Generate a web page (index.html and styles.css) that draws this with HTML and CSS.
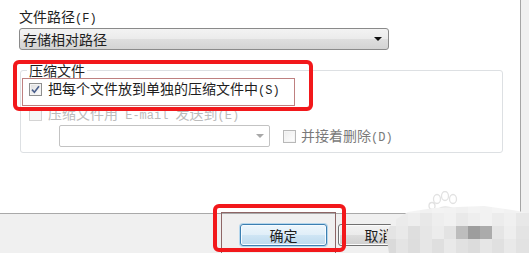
FILE: index.html
```html
<!DOCTYPE html>
<html lang="zh-CN">
<head>
<meta charset="utf-8">
<title>压缩文件</title>
<link rel="stylesheet" href="styles.css">
</head>
<body>
  <div class="panel">
    <div class="field-label">文件路径<span class="lat">(F)</span></div>
    <div class="select">
      <span class="select-text">存储相对路径</span>
      <span class="arrow"></span>
    </div>
    <fieldset class="group">
      <legend>压缩文件</legend>
      <div class="row row-first">
        <span class="cb cb-checked">
          <svg width="9" height="9" viewBox="0 0 9 9"><path d="M1 4.6 L3.4 7.2 L8 1.2" fill="none" stroke="#4a5f8c" stroke-width="1.6"/></svg>
        </span>
        <span class="cb-text">把每个文件放到单独的压缩文件中<span class="lat">(S)</span></span>
      </div>
      <div class="row row-faded">
        <span class="cb cb-faded"></span>
        <span class="cb-text">压缩文件用<span class="lat"> E-mail </span>发送到<span class="lat">(E)</span></span>
      </div>
      <div class="row row-combo">
        <div class="combo"><span class="arrow arrow-grey"></span></div>
        <span class="cb cb-light"></span>
        <span class="cb-text dim">并接着删除<span class="lat">(D)</span></span>
      </div>
    </fieldset>
  </div>
  <div class="footer">
    <button class="btn btn-ok">确定</button>
    <button class="btn btn-cancel">取消</button>
  </div>

  <svg class="paw" width="34" height="24" viewBox="0 0 34 24">
    <g fill="none" stroke="#e2e2e2" stroke-width="1.3">
      <ellipse cx="9" cy="8" rx="3.5" ry="4.5"/>
      <ellipse cx="17" cy="5" rx="3.5" ry="4.5"/>
      <ellipse cx="25" cy="8" rx="3.5" ry="4.5"/>
      <ellipse cx="4" cy="15" rx="3" ry="3.5"/>
      <path d="M8 22 C 9 14, 25 14, 28 22"/>
    </g>
  </svg>

  <div class="mosaic">
    <span style="background:#f3f3f3"></span><span style="background:#f2f2f2"></span><span style="background:#f4f4f4"></span><span style="background:#f1f1f1"></span><span style="background:#f3f3f3"></span><span style="background:#f2f2f2"></span><span style="background:#f0f0f0"></span><span style="background:#f3f3f3"></span><span style="background:#f2f2f2"></span><span style="background:#f4f4f4"></span><span style="background:#f2f2f2"></span><span style="background:#f3f3f3"></span>
    <span style="background:#f0f0f0"></span><span style="background:#ebebeb"></span><span style="background:#eeeeee"></span><span style="background:#e8e8e8"></span><span style="background:#eeeeee"></span><span style="background:#f1f1f1"></span><span style="background:#e9e9e9"></span><span style="background:#eeeeee"></span><span style="background:#f2f2f2"></span><span style="background:#ececec"></span><span style="background:#f0f0f0"></span><span style="background:#e8e8e8"></span>
    <span style="background:#e4e4e4"></span><span style="background:#e9e9e9"></span><span style="background:#dedede"></span><span style="background:#e6e6e6"></span><span style="background:#ececec"></span><span style="background:#e3e3e3"></span><span style="background:#bdbdbd"></span><span style="background:#9d9d9d"></span><span style="background:#ababab"></span><span style="background:#e5e5e5"></span><span style="background:#eeeeee"></span><span style="background:#e4e4e4"></span>
    <span style="background:#dadada"></span><span style="background:#e4e4e4"></span><span style="background:#dddddd"></span><span style="background:#e6e6e6"></span><span style="background:#dfdfdf"></span><span style="background:#e9e9e9"></span><span style="background:#e1e1e1"></span><span style="background:#dcdcdc"></span><span style="background:#e6e6e6"></span><span style="background:#e0e0e0"></span><span style="background:#e9e9e9"></span><span style="background:#e2e2e2"></span>
  </div>

  <div class="thin thin-a"></div>
  <div class="thin thin-b"></div>
  <div class="mark mark-a"></div>
  <div class="mark mark-b"></div>
</body>
</html>
```
FILE: styles.css
```css
* { box-sizing: border-box; }
html, body { margin: 0; padding: 0; }
body {
  width: 529px;
  height: 253px;
  overflow: hidden;
  position: relative;
  background: #f0f0f0;
  font-family: "Noto Sans CJK SC", sans-serif;
  font-size: 14px;
  color: #1e1e1e;
}
.lat { font-family: "Liberation Mono", monospace; font-size: 12px; }

.panel {
  width: 521px;
  height: 214px;
  background: #fff;
  border-right: 1px solid #a5a5a5;
  border-bottom: 1px solid #a9a9a9;
  padding: 7px 0 0 19px;
}
.field-label { height: 18px; line-height: 18px; }

.select {
  margin-top: 3px;
  width: 370px;
  height: 22px;
  border: 1px solid #8a8a8a;
  border-radius: 3px;
  background: linear-gradient(#f3f3f3 0%, #ebebeb 50%, #dedede 51%, #d3d3d3 100%);
  display: flex;
  align-items: center;
  padding-left: 3px;
  line-height: 18px;
}
.arrow {
  margin-left: auto;
  margin-right: 6px;
  width: 0;
  height: 0;
  border-left: 4px solid transparent;
  border-right: 4px solid transparent;
  border-top: 4px solid #111;
}

.group {
  margin: 12px 0 0 1px;
  width: 483px;
  min-width: 0;
  padding: 0 0 5px 0;
  border: 1px solid #dde0e3;
  border-radius: 3px;
}
.group legend {
  margin-left: 6px;
  padding: 0 2px;
  line-height: 16px;
  font-size: 14px;
}

.row {
  display: flex;
  align-items: center;
  height: 22px;
  padding-left: 8px;
  line-height: 18px;
}
.row-faded { margin-top: 3px; color: #bcbcbc; }
.cb {
  width: 13px;
  height: 13px;
  flex: none;
  border: 1px solid #8e8f8f;
  background: linear-gradient(135deg, #dcdcdc, #ffffff);
  box-shadow: inset 0 0 0 1px #f4f4f4;
  display: flex;
  align-items: center;
  justify-content: center;
}
.cb-faded { border-color: #d4d4d4; background: #f6f6f6; box-shadow: none; }
.cb-light { border-color: #b8b8b8; background: linear-gradient(135deg, #ececec, #ffffff); }
.cb-text { margin-left: 6px; white-space: nowrap; }
.dim { margin-left: 5px; color: #7a7a7a; }

.combo {
  margin-left: 30px;
  width: 211px;
  height: 22px;
  border: 1px solid #c3c3c3;
  border-radius: 2px;
  background: #fff;
  display: flex;
  align-items: center;
  margin-right: 13px;
}
.arrow-grey { margin-right: 5px; border-top-color: #a8a8a8; }

.footer {
  display: flex;
  gap: 11px;
  padding: 10px 0 0 240px;
}
.btn {
  width: 87px;
  height: 22px;
  padding: 0;
  font: inherit;
  line-height: 18px;
  color: #1e1e1e;
  border-radius: 3px;
  border: 1px solid #707070;
  background: linear-gradient(#f2f2f2 0%, #ebebeb 50%, #dddddd 51%, #cfcfcf 100%);
  box-shadow: inset 0 0 0 1px #fcfcfc;
}
.btn-ok {
  border-color: #3c7fb1;
  background: linear-gradient(#edf6fc 0%, #e0eef8 50%, #cfe5f4 51%, #bcd9ee 100%);
  box-shadow: inset 0 0 0 1px #f6fbff, 0 0 0 1px #b5d6ec;
}
.btn-cancel { padding-right: 6px; }

.paw { position: absolute; left: 428px; top: 191px; }

.mosaic {
  position: absolute;
  left: 384px;
  top: 200px;
  width: 145px;
  height: 53px;
  display: grid;
  grid-template-columns: repeat(11, 12px) 13px;
  grid-template-rows: 13px 13px 13px 14px;
  clip-path: polygon(5px 53px, 2px 34px, 8px 22px, 24px 12px, 50px 8px, 100px 6px, 128px 10px, 145px 13px, 145px 53px);
  filter: blur(0.4px);
}

.thin { position: absolute; border: 1px solid #bf8080; }
.thin-a { left: 22px; top: 78px; width: 273px; height: 28px; }
.thin-b { left: 221px; top: 212px; width: 115px; height: 50px; border-color: #8e6666; }

.mark { position: absolute; border: 4px solid #f2181b; border-radius: 6px; }
.mark-a { left: 13px; top: 60px; width: 300px; height: 51px; }
.mark-b { left: 213px; top: 204px; width: 133px; height: 48px; }
```
